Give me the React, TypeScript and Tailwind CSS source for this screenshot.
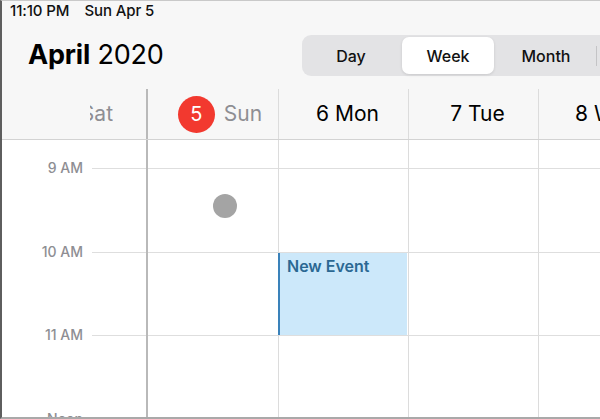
import React from "react";

const rows = ["9 AM", "10 AM", "11 AM", "Noon"];

function Col({ children, first }: { children?: React.ReactNode; first?: boolean }) {
  return (
    <div className={"relative w-[130px] shrink-0 pt-[28px] " + (first ? "" : "border-l border-[#dcdcdc]")}>
      {children}
    </div>
  );
}

export default function App() {
  return (
    <div
      className="w-[600px] h-[419px] overflow-hidden border-l-2 border-l-[#5e5e5e] border-t border-t-[#c9c9c9] border-b-2 border-b-[#a9a9a9] bg-white flex flex-col"
      style={{ fontFamily: "Inter, 'Liberation Sans', sans-serif" }}
    >
      {/* Header */}
      <div className="bg-[#f7f7f7] shrink-0">
        <div className="h-[21px] flex items-center pl-[8px] gap-[15px] text-[15px] font-medium text-[#111] tracking-[-0.1px]">
          <span>11:10 PM</span>
          <span>Sun Apr 5</span>
        </div>
        <div className="h-[67px] flex items-center">
          <div className="w-[300px] shrink-0 pl-[26px] text-[27px] text-black tracking-[-0.2px]">
            <span className="font-bold">April</span> <span>2020</span>
          </div>
          <div className="shrink-0 w-[400px] h-[41px] rounded-[9px] bg-[#e3e3e5] flex items-center text-[16px] font-medium text-[#111]">
            <div className="w-[98px] text-center">Day</div>
            <div className="w-[96px] px-[2px]">
              <div className="h-[37px] rounded-[7px] bg-white shadow-[0_1px_3px_rgba(0,0,0,0.12)] flex items-center justify-center">
                Week
              </div>
            </div>
            <div className="w-[100px] text-center">Month</div>
            <div className="w-px h-[20px] bg-[#c4c4c6]" />
            <div className="w-[100px] text-center">Year</div>
          </div>
        </div>
        <div className="h-[51px] flex border-b border-[#d3d3d3] text-[21px]">
          <div className="w-[146px] shrink-0 border-r-2 border-[#b9b9b9] flex items-center justify-end pr-[33px]">
            <div className="w-[23px] overflow-hidden flex justify-end">
              <span className="shrink-0 text-[#8e8e93]">Sat</span>
            </div>
          </div>
          <div className="w-[130px] shrink-0 flex items-center justify-center gap-[9px] pl-[14px]">
            <div className="w-[37px] h-[37px] rounded-full bg-[#f2392f] text-white flex items-center justify-center text-[20px]">
              5
            </div>
            <span className="text-[#8e8e93]">Sun</span>
          </div>
          <div className="w-[130px] shrink-0 border-l border-[#dcdcdc] flex items-center justify-center pl-[8px] text-black">
            6 Mon
          </div>
          <div className="w-[130px] shrink-0 border-l border-[#dcdcdc] flex items-center justify-center pl-[8px] text-black">
            7 Tue
          </div>
          <div className="w-[130px] shrink-0 border-l border-[#dcdcdc] flex items-center pl-[36px] text-black whitespace-nowrap">
            8 Wed
          </div>
        </div>
      </div>

      {/* Grid */}
      <div className="flex-1 flex overflow-hidden">
        <div className="w-[146px] shrink-0 border-r-2 border-[#b9b9b9] pt-[28px]">
          {rows.map((r) => (
            <div key={r} className="flex h-[83.5px] items-start">
              <div className="w-[90px] pr-[9px] text-right text-[14px] leading-[16px] -mt-[8px] text-[#8e8e93] font-medium">
                {r}
              </div>
              <div className="flex-1 border-t border-[#dedede]" />
            </div>
          ))}
        </div>
        <Col first>
          {rows.map((r) => (
            <div key={r} className="h-[83.5px] border-t border-[#dedede]" />
          ))}
          <div className="absolute left-[65px] top-[54px] w-[24px] h-[24px] rounded-full bg-[#a4a4a4]" />
        </Col>
        <Col>
          {rows.map((r, i) => (
            <div key={r} className="h-[83.5px] border-t border-[#dedede]">
              {i === 1 && (
                <div className="-ml-px w-[129px] h-full bg-[#cce8fa] border-l-2 border-[#3a82ba] pl-[7px] pt-px text-[16px] font-semibold text-[#2b6893]">
                  New Event
                </div>
              )}
            </div>
          ))}
        </Col>
        <Col>
          {rows.map((r) => (
            <div key={r} className="h-[83.5px] border-t border-[#dedede]" />
          ))}
        </Col>
        <Col>
          {rows.map((r) => (
            <div key={r} className="h-[83.5px] border-t border-[#dedede]" />
          ))}
        </Col>
      </div>
    </div>
  );
}
